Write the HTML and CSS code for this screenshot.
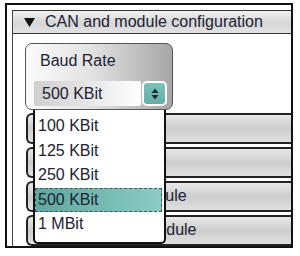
FILE: index.html
```html
<!DOCTYPE html>
<html lang="en">
<head>
    <meta charset="UTF-8">
    <meta name="viewport" content="width=device-width, initial-scale=1.0">
    <title>CAN configuration</title>
    <link rel="stylesheet" href="styles.css">
</head>
<body>

<div class="frame">
    <div class="panel">
        <div class="panel-head">
            <svg class="caret" width="11" height="9" viewBox="0 0 11 9"><polygon points="0,0 11,0 5.5,9" fill="#111"/></svg>
            CAN and module configuration
        </div>
        <div class="panel-body">
            <div class="baud">
                <div class="baud-label">Baud Rate</div>
                <div class="select">
                    <span class="select-value">500 KBit</span>
                    <span class="spin">
                        <svg width="8" height="12" viewBox="0 0 8 12"><polygon points="4,0.5 7.5,5 0.5,5" fill="#1e2e2c"/><polygon points="0.5,7 7.5,7 4,11.5" fill="#1e2e2c"/></svg>
                    </span>
                </div>
            </div>

            <!-- rows behind the open list; only the tail of the last two labels shows -->
            <div class="rows">
                <div class="row"></div>
                <div class="row"></div>
                <div class="row">Reset module</div>
                <div class="row">Restart module</div>
            </div>

            <ul class="dropdown">
                <li class="item">100 KBit</li>
                <li class="item">125 KBit</li>
                <li class="item">250 KBit</li>
                <li class="item selected">500 KBit</li>
                <li class="item">1 MBit</li>
            </ul>
        </div>
    </div>
</div>

</body>
</html>
```

FILE: styles.css
```css
body {
    margin: 0;
    background-color: #ffffff;
    font-family: "Liberation Sans", Arial, sans-serif;
    color: #222233;
}

.frame {
    box-sizing: border-box;
    margin: 3px 0 0 5px;
    width: 288px;
    height: 245px;
    border: 2px solid #111111;
    padding: 5px 0 0 5px;
    overflow: hidden;
}

.panel {
    height: 100%;
    border-left: 1px solid #444444;
}

.panel-head {
    box-sizing: border-box;
    height: 24px;
    display: flex;
    align-items: center;
    border-top: 1px solid #333333;
    border-bottom: 1px solid #333333;
    background: linear-gradient(#f0f0f0, #d6d6d6 55%, #e2e2e2);
    font-size: 16px;
    padding-left: 11px;
}

.caret {
    margin-right: 10px;
}

.panel-body {
    position: relative;
    padding: 9px 0 0 12px;
}

.baud {
    box-sizing: border-box;
    width: 148px;
    height: 67px;
    border: 1px solid #555555;
    border-radius: 7px;
    background: linear-gradient(to right, #fbfbfb, #e2e2e2 45%, #a6a6a6);
    padding: 8px 0 0 8px;
}

.baud-label {
    font-size: 16px;
    line-height: 18px;
    padding-left: 6px;
}

.select {
    display: flex;
    margin-top: 11px;
    width: 133px;
    height: 25px;
}

.select-value {
    flex: 1;
    display: flex;
    align-items: center;
    padding-left: 8px;
    font-size: 16px;
    background: linear-gradient(to right, #cfcfcf, #e6e6e6 50%, #ffffff);
    border-radius: 2px;
}

.spin {
    box-sizing: border-box;
    width: 25px;
    margin-left: 1px;
    display: flex;
    align-items: center;
    justify-content: center;
    background: linear-gradient(#7cc2ba, #62aea5);
    border: 2px solid #ffffff;
    border-radius: 5px;
}

.rows {
    margin-top: 3px;
    margin-left: 1px;
    display: flex;
    flex-direction: column;
    gap: 3px;
}

.row {
    box-sizing: border-box;
    height: 31px;
    border: 2px solid #222222;
    border-right: none;
    border-radius: 6px 0 0 6px;
    background: linear-gradient(#e8e8e8, #cdcdcd 50%, #e0e0e0);
    font-size: 16px;
    line-height: 26px;
    padding-left: 60px;
    white-space: nowrap;
}

.dropdown {
    position: absolute;
    left: 20px;
    top: 76px;
    box-sizing: border-box;
    width: 133px;
    height: 134px;
    margin: 0;
    padding: 4px 0 0 0;
    list-style: none;
    background-color: #ffffff;
    border: 2px solid #111111;
    border-top: none;
    border-radius: 0 0 5px 5px;
}

.item {
    box-sizing: border-box;
    height: 24.5px;
    line-height: 24px;
    font-size: 16px;
    padding-left: 3px;
    margin: 0 2px 0 0;
}

.item.selected {
    background: linear-gradient(to right, #5fa79f, #8ccbc3);
    border: 1px dashed #3a5a57;
    line-height: 22px;
    padding-left: 2px;
}
```
